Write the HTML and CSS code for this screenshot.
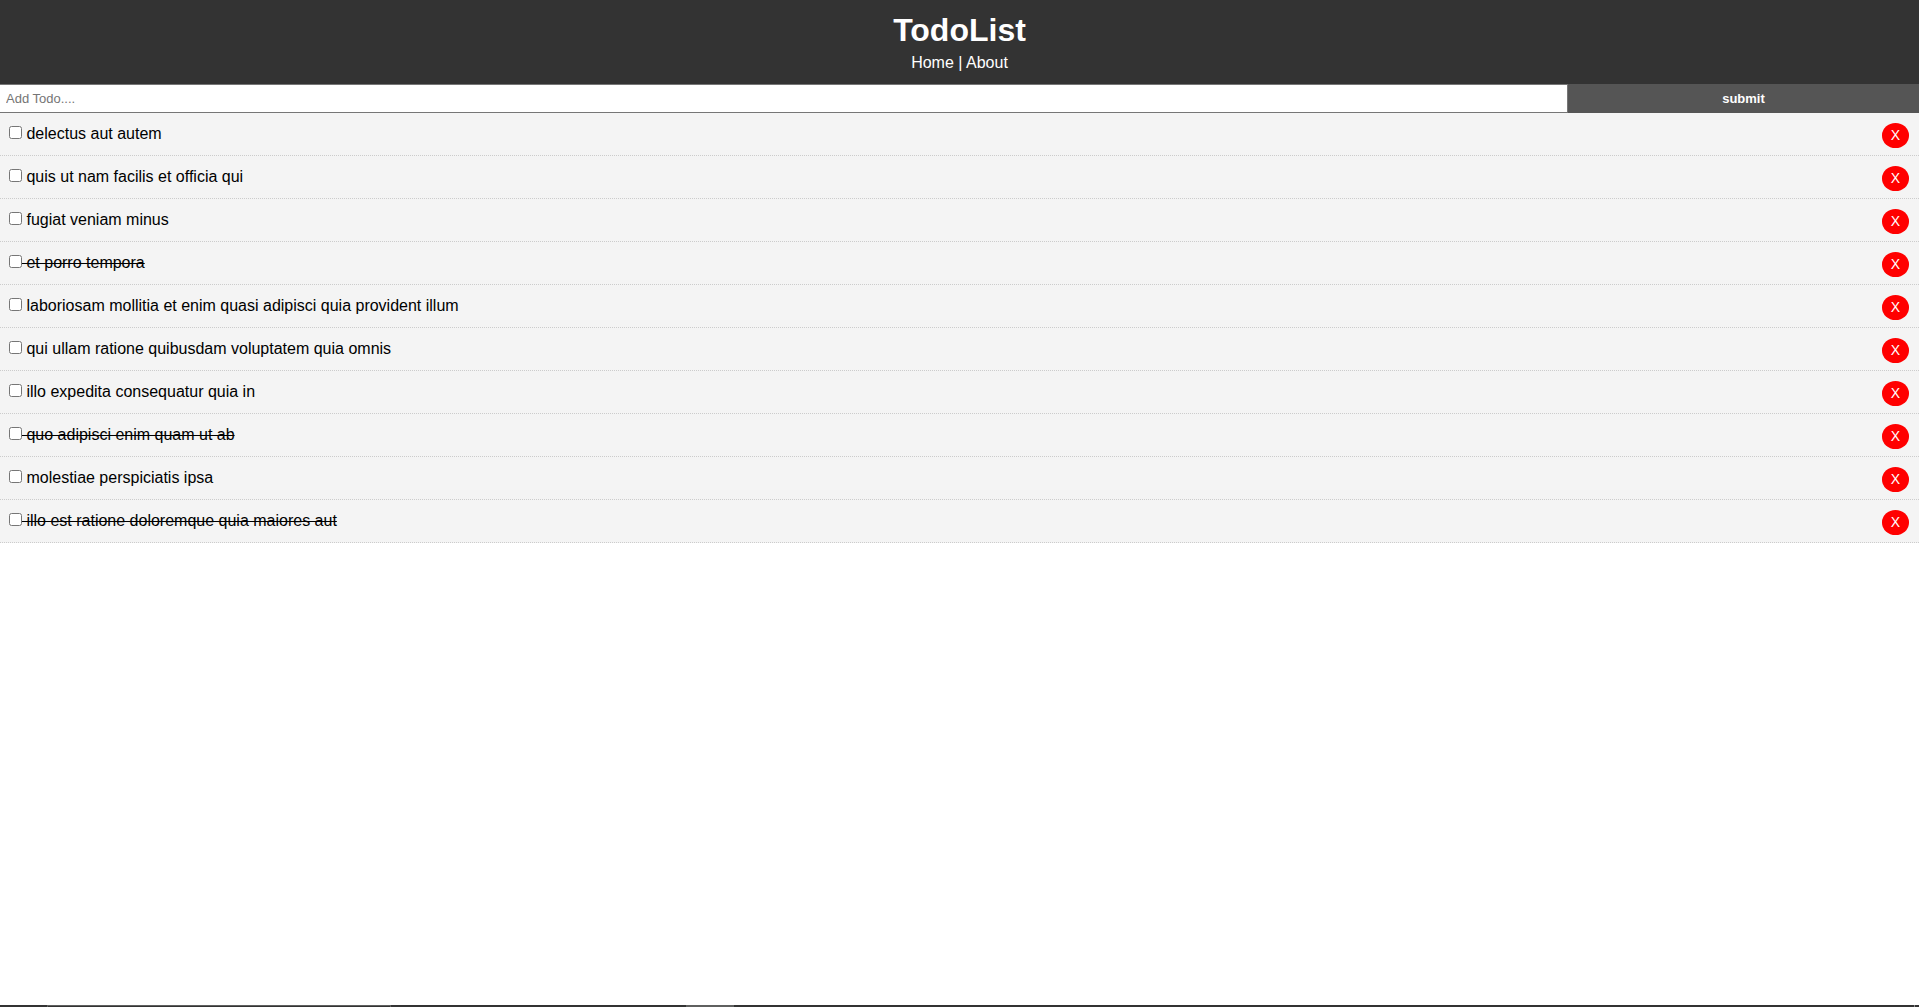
FILE: index.html
```html
<!DOCTYPE html>
<html lang="en">
<head>
<meta charset="utf-8">
<title>TodoList</title>
<link rel="stylesheet" href="styles.css">
</head>
<body>
<header class="header">
  <h1>TodoList</h1>
  <nav><a class="link" href="#home">Home</a> | <a class="link" href="#about">About</a></nav>
</header>
<main>
  <form class="add-form">
    <input class="add-input" type="text" name="title" placeholder="Add Todo...." aria-label="Add Todo">
    <button class="btn" type="button">submit</button>
  </form>
  <div class="todo"><label><input type="checkbox"> delectus aut autem</label><button class="delete" type="button">X</button></div>
  <div class="todo"><label><input type="checkbox"> quis ut nam facilis et officia qui</label><button class="delete" type="button">X</button></div>
  <div class="todo"><label><input type="checkbox"> fugiat veniam minus</label><button class="delete" type="button">X</button></div>
  <div class="todo done"><label><input type="checkbox"> et porro tempora</label><button class="delete" type="button">X</button></div>
  <div class="todo"><label><input type="checkbox"> laboriosam mollitia et enim quasi adipisci quia provident illum</label><button class="delete" type="button">X</button></div>
  <div class="todo"><label><input type="checkbox"> qui ullam ratione quibusdam voluptatem quia omnis</label><button class="delete" type="button">X</button></div>
  <div class="todo"><label><input type="checkbox"> illo expedita consequatur quia in</label><button class="delete" type="button">X</button></div>
  <div class="todo done"><label><input type="checkbox"> quo adipisci enim quam ut ab</label><button class="delete" type="button">X</button></div>
  <div class="todo"><label><input type="checkbox"> molestiae perspiciatis ipsa</label><button class="delete" type="button">X</button></div>
  <div class="todo done"><label><input type="checkbox"> illo est ratione doloremque quia maiores aut</label><button class="delete" type="button">X</button></div>
</main>
<footer class="bottom-edge">
  <div class="edge-field"></div>
  <div class="edge-active"></div>
  <div class="edge-end"></div>
</footer>
</body>
</html>
```

FILE: styles.css
```css
* {
  box-sizing: border-box;
  margin: 0;
  padding: 0;
}

body {
  display: flex;
  flex-direction: column;
  min-height: 100vh;
  font-family: Arial, "Liberation Sans", Helvetica, sans-serif;
  font-size: 16px;
  line-height: 22px;
  background: #fff;
}

.header {
  background: #333;
  color: #fff;
  text-align: center;
  padding: 10px;
}

.header h1 {
  padding-bottom: 2px;
  font-size: 32px;
  line-height: 40px;
}

.link {
  color: #fff;
  text-decoration: none;
}

.add-form {
  display: flex;
}

.add-input {
  flex: 10;
  padding: 5px 6px;
  border: 1px solid #767676;
  border-left: none;
  font-family: inherit;
  font-size: 13px;
}

.btn {
  flex: 2;
  padding: 7px 20px;
  border: none;
  background: #555;
  color: #fff;
  font-family: inherit;
  font-size: 13px;
  font-weight: bold;
}

.todo {
  display: flex;
  justify-content: space-between;
  padding: 10px 10px 7px 9px;
  background: #f4f4f4;
  border-bottom: 1px dotted #ccc;
}

.done label {
  text-decoration: line-through;
}

.delete {
  height: 25px;
  padding: 5px 9px;
  border: none;
  border-radius: 50%;
  background: #f00;
  color: #fff;
  font-family: inherit;
  font-size: 14px;
  line-height: 15px;
}

.bottom-edge {
  display: flex;
  height: 2px;
  margin-top: auto;
  padding: 0 4px 0 47px;
  background: #333;
}

.edge-field {
  width: 344px;
  border: 1px solid #5f605f;
  border-bottom: none;
}

.edge-active {
  width: 48px;
  margin-left: 295px;
  background: #5f605f;
}

.edge-end {
  width: 1px;
  margin-left: auto;
  background: #8a8a8a;
}
```
